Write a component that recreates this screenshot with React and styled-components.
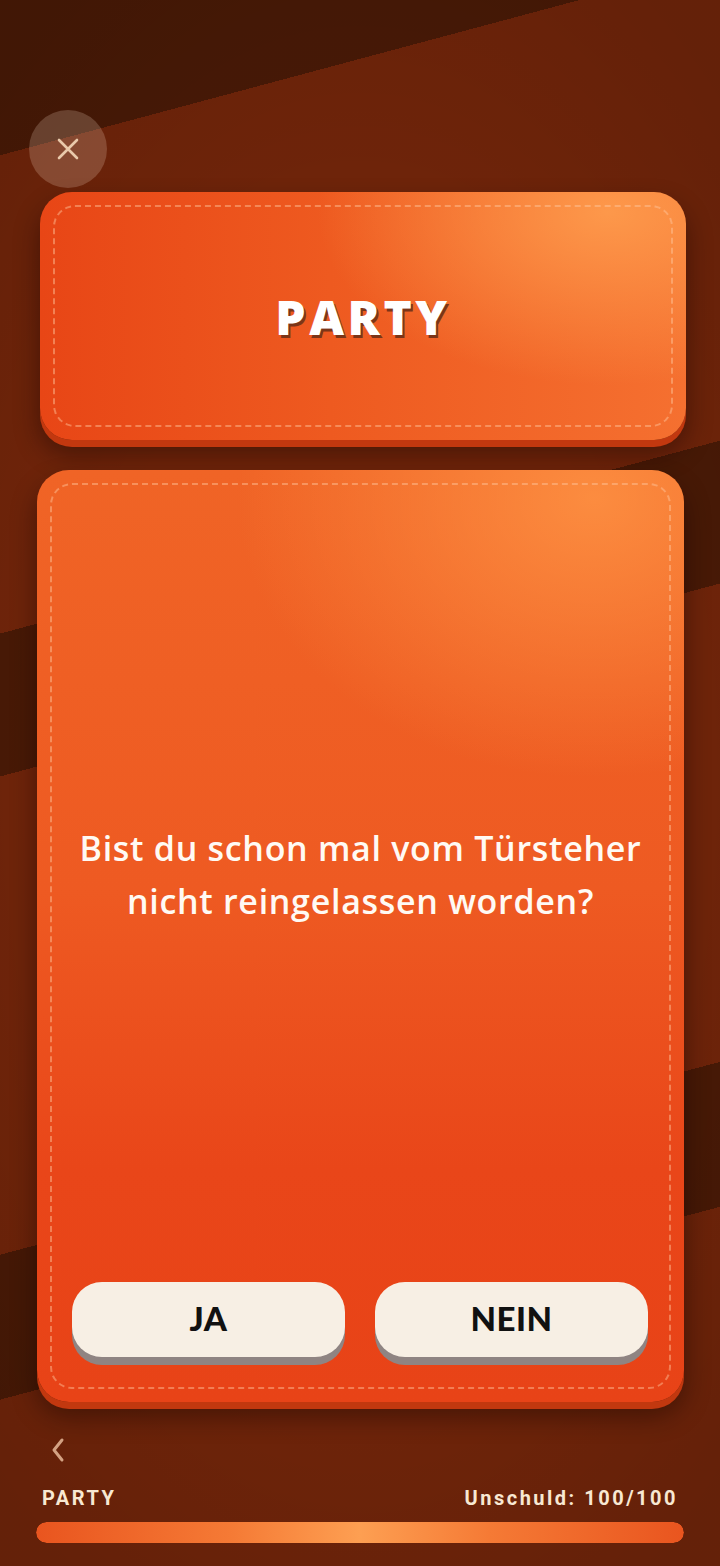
import React from "react"
import styled, { createGlobalStyle } from "styled-components"

const GlobalStyle = createGlobalStyle`
  html, body {
    margin: 0;
    padding: 0;
    background: #6e240a;
  }
  * {
    box-sizing: border-box;
  }
`

function App() {
  return (
    <Screen>
      <GlobalStyle />
      <TopBar>
        <CloseButton aria-label="Schließen">
          <svg width="26" height="26" viewBox="0 0 26 26">
            <path
              d="M4 4 L22 22 M22 4 L4 22"
              stroke="#e9c9ab"
              strokeWidth="2.6"
              strokeLinecap="round"
              fill="none"
            />
          </svg>
        </CloseButton>
      </TopBar>

      <CategoryCard>
        <Stitch />
        <CategoryTitle>PARTY</CategoryTitle>
      </CategoryCard>

      <QuestionCard>
        <Stitch />
        <QuestionArea>
          <Question>
            Bist du schon mal vom Türsteher
            <br />
            nicht reingelassen worden?
          </Question>
        </QuestionArea>
        <ButtonRow>
          <AnswerButton>JA</AnswerButton>
          <AnswerButton>NEIN</AnswerButton>
        </ButtonRow>
      </QuestionCard>

      <Footer>
        <BackButton aria-label="Zurück">
          <svg width="16" height="26" viewBox="0 0 16 26">
            <path
              d="M12 3 L4 13 L12 23"
              stroke="#d4a283"
              strokeWidth="3"
              strokeLinecap="round"
              strokeLinejoin="round"
              fill="none"
            />
          </svg>
        </BackButton>
        <InfoRow>
          <Label>PARTY</Label>
          <Label>Unschuld: 100/100</Label>
        </InfoRow>
        <Progress>
          <ProgressFill style={{ width: `${(100 / 100) * 100}%` }} />
        </Progress>
      </Footer>
    </Screen>
  )
}

const Screen = styled.div`
  position: relative;
  width: 720px;
  height: 1566px;
  overflow: hidden;
  display: flex;
  flex-direction: column;
  font-family: Lato, "Noto Sans", sans-serif;
  background:
    radial-gradient(ellipse 75% 60% at 50% 50%, rgba(0, 0, 0, 0) 50%, rgba(0, 0, 0, 0.12) 100%),
    repeating-linear-gradient(
      165deg,
      #4a1a06 0px,
      #4a1a06 150px,
      #72250a 150px,
      #72250a 612px,
      #4a1a06 612px,
      #4a1a06 750px,
      #72250a 750px,
      #72250a 1212px,
      #4a1a06 1212px,
      #4a1a06 1352px,
      #72250a 1352px,
      #72250a 1800px
    );
`

const TopBar = styled.div`
  display: flex;
  padding: 110px 0 0 29px;
  height: 190px;
  margin-bottom: 2px;
`

const CloseButton = styled.button`
  width: 78px;
  height: 78px;
  border-radius: 50%;
  border: none;
  padding: 0;
  background: rgba(255, 230, 210, 0.2);
  display: flex;
  align-items: center;
  justify-content: center;
`

const cardBase = `
  position: relative;
  border-radius: 32px;
  box-shadow:
    0 7px 0 #c2380f,
    0 14px 26px rgba(20, 4, 0, 0.45);
`

const CategoryCard = styled.div`
  ${cardBase}
  margin: 0 34px 0 40px;
  height: 248px;
  display: flex;
  align-items: center;
  justify-content: center;
  background:
    radial-gradient(ellipse 45% 70% at 88% 8%, rgba(255, 160, 80, 0.85) 0%, rgba(255, 150, 70, 0) 100%),
    linear-gradient(90deg, #e84616 0%, #ee5a20 45%, #f57030 100%);
`

const Stitch = styled.div`
  position: absolute;
  inset: 13px;
  border: 2px dashed rgba(255, 200, 160, 0.45);
  border-radius: 22px;
  pointer-events: none;
`

const CategoryTitle = styled.h1`
  margin: 0;
  color: #ffffff;
  font-family: "Open Sans", Lato, sans-serif;
  font-weight: 800;
  font-size: 48px;
  letter-spacing: 3.5px;
  text-shadow: 2px 3px 0 #7c3518;
`

const QuestionCard = styled.div`
  ${cardBase}
  margin: 30px 36px 0 37px;
  height: 932px;
  display: flex;
  flex-direction: column;
  background:
    radial-gradient(ellipse 55% 30% at 86% 3%, rgba(255, 150, 70, 0.8) 0%, rgba(255, 150, 70, 0) 100%),
    linear-gradient(180deg, #f06426 0%, #ee5a22 45%, #e94619 75%, #e84317 100%);
`

const QuestionArea = styled.div`
  flex: 1;
  display: flex;
  align-items: center;
  justify-content: center;
  padding: 0 16px 2px 16px;
`

const Question = styled.p`
  margin: 0;
  text-align: center;
  color: #fffaf4;
  font-family: "Open Sans", Lato, sans-serif;
  font-weight: 600;
  font-size: 34px;
  letter-spacing: 0.7px;
  line-height: 53px;
`

const ButtonRow = styled.div`
  display: grid;
  grid-template-columns: 1fr 1fr;
  gap: 30px;
  padding: 0 36px 45px 35px;
`

const AnswerButton = styled.button`
  height: 75px;
  border: none;
  border-radius: 30px;
  background: #f7efe4;
  box-shadow: 0 8px 0 #8f8482;
  color: #111;
  font-family: Lato, "Noto Sans", sans-serif;
  font-weight: 900;
  font-size: 33px;
  letter-spacing: 0.5px;
  padding-bottom: 4px;
`

const Footer = styled.div`
  display: flex;
  flex-direction: column;
  padding: 34px 36px 0 36px;
`

const BackButton = styled.button`
  align-self: flex-start;
  margin-left: 14px;
  width: 20px;
  height: 28px;
  padding: 0;
  border: none;
  background: none;
  display: flex;
  align-items: center;
`

const InfoRow = styled.div`
  display: flex;
  justify-content: space-between;
  margin-top: 22px;
  padding: 0 6px;
`

const Label = styled.span`
  color: #f8e8d2;
  font-family: Roboto, "Liberation Sans", sans-serif;
  font-weight: 700;
  font-size: 20px;
  letter-spacing: 2.5px;
`

const Progress = styled.div`
  margin-top: 12px;
  height: 21px;
  border-radius: 11px;
  background: rgba(0, 0, 0, 0.2);
  overflow: hidden;
`

const ProgressFill = styled.div`
  height: 100%;
  border-radius: 11px;
  background: linear-gradient(90deg, #e9551f 0%, #f57a35 30%, #fd9f52 50%, #f57a35 70%, #e9551f 100%);
`

export default App
